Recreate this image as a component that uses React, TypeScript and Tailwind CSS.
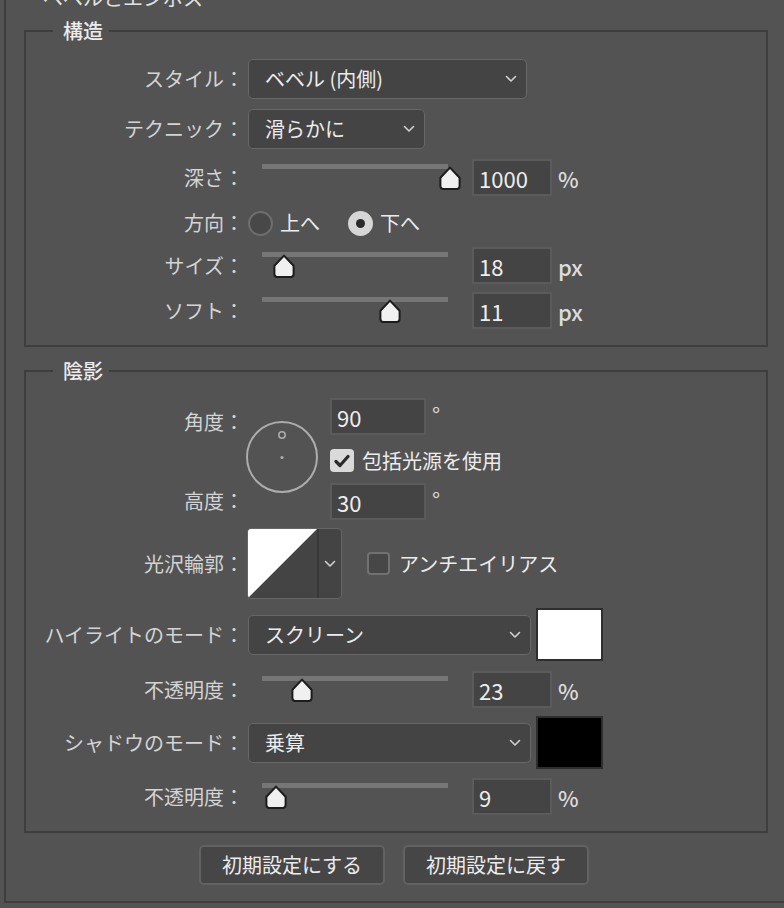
import React from 'react';

const FONT = "font-['Noto_Sans_CJK_JP','Noto_Sans',sans-serif]";

function Label({ children, className = '' }: { children: React.ReactNode; className?: string }) {
  return (
    <div className={`w-[218px] shrink-0 text-right text-[20px] leading-[28px] text-[#d4d4d4] ${className}`}>
      {children}：
    </div>
  );
}

function Chevron() {
  return (
    <svg width="12" height="8" viewBox="0 0 12 8" fill="none">
      <path d="M1.5 1.5 L6 6 L10.5 1.5" stroke="#d0d0d0" strokeWidth="1.6" strokeLinecap="round" strokeLinejoin="round" />
    </svg>
  );
}

function Select({ value, width }: { value: string; width: string }) {
  return (
    <div
      className={`${width} ml-[4px] flex h-[40px] shrink-0 items-center justify-between rounded-[5px] border border-[#676767] bg-[#444444] pl-[16px] pr-[9px] text-[20px] leading-[28px] text-[#ececec]`}
    >
      <span>{value}</span>
      <Chevron />
    </div>
  );
}

function Thumb({ left }: { left: number }) {
  return (
    <svg
      className="absolute top-[7px]"
      style={{ left: left - 12 }}
      width="24"
      height="25"
      viewBox="0 0 24 25"
      fill="none"
    >
      <path
        d="M12 1.6 L21.6 11.8 V20 Q21.6 23 18.6 23 H5.4 Q2.4 23 2.4 20 V11.8 Z"
        fill="#f0f0f0"
        stroke="#1c1c1c"
        strokeWidth="2"
        strokeLinejoin="round"
      />
    </svg>
  );
}

function Slider({ thumb }: { thumb: number }) {
  return (
    <div className="relative ml-[18px] h-[37px] w-[186px] shrink-0">
      <div className="mt-[5px] h-[5px] bg-[#767676]" />
      <Thumb left={thumb} />
    </div>
  );
}

function NumField({ value, width = 'w-[80px]', className = '' }: { value: string; width?: string; className?: string }) {
  return (
    <div
      className={`${width} ${className} flex h-[37px] shrink-0 items-center border-2 border-[#5b5b5b] bg-[#444444] pl-[5px] text-[22px] leading-[28px] text-[#eeeeee]`}
    >
      {value}
    </div>
  );
}

function Unit({ children }: { children: React.ReactNode }) {
  return <span className="ml-[6px] text-[22px] font-medium leading-[28px] text-[#dcdcdc]">{children}</span>;
}

function SliderRow({ label, thumb, value, unit, className = '' }: { label: string; thumb: number; value: string; unit: string; className?: string }) {
  return (
    <div className={`flex items-center ${className}`}>
      <Label>{label}</Label>
      <Slider thumb={thumb} />
      <NumField value={value} className="ml-[24px]" />
      <Unit>{unit}</Unit>
    </div>
  );
}

function Radio({ checked }: { checked?: boolean }) {
  if (checked) {
    return (
      <div className="flex h-[25px] w-[25px] items-center justify-center rounded-full bg-[#d6d6d6]">
        <div className="h-[9px] w-[9px] rounded-full bg-[#2a2a2a]" />
      </div>
    );
  }
  return <div className="h-[25px] w-[25px] rounded-full border-2 border-[#6e6e6e] bg-[#484848]" />;
}

function Group({ title, children, className = '' }: { title: string; children: React.ReactNode; className?: string }) {
  return (
    <fieldset className={`ml-[18px] w-[744px] border-2 border-[#3e3e3e] ${className}`}>
      <legend className="ml-[27px] pl-[10px] pr-[6px] text-[20px] font-medium leading-[28px] text-[#ececec]">{title}</legend>
      {children}
    </fieldset>
  );
}

function AngleDial() {
  return (
    <svg width="72" height="72" viewBox="0 0 72 72" fill="none">
      <circle cx="36" cy="36" r="35" stroke="#adadad" strokeWidth="2" />
      <circle cx="36" cy="14" r="3.2" stroke="#adadad" strokeWidth="1.5" />
      <circle cx="36" cy="36.5" r="1.6" fill="#adadad" />
    </svg>
  );
}

function Check() {
  return (
    <div className="flex h-[23px] w-[24px] items-center justify-center rounded-[4px] bg-[#dadada]">
      <svg width="16" height="14" viewBox="0 0 16 14" fill="none">
        <path d="M2 7.5 L6 11.5 L14 2.5" stroke="#2b2b2b" strokeWidth="3.2" strokeLinecap="round" strokeLinejoin="round" />
      </svg>
    </div>
  );
}

function ContourSwatch() {
  return (
    <div className="ml-[3px] flex h-[71px] w-[95px] shrink-0 overflow-hidden rounded-[4px] border border-[#666666] bg-[#444444]">
      <svg width="69" height="69" viewBox="0 0 69 69" className="shrink-0">
        <polygon points="0,0 69,0 0,69" fill="#ffffff" />
      </svg>
      <div className="flex flex-1 items-center justify-center border-l-2 border-[#383838]">
        <Chevron />
      </div>
    </div>
  );
}

function Button({ children }: { children: React.ReactNode }) {
  return (
    <button className="flex h-[40px] w-[186px] items-center justify-center rounded-[5px] border-2 border-[#626262] bg-[#464646] text-[20px] leading-[28px] text-[#ececec]">
      {children}
    </button>
  );
}

export default function App() {
  return (
    <div className={`h-[908px] w-[784px] overflow-hidden bg-[#535353] ${FONT}`}>
      <fieldset className="-mt-[16px] ml-[4px] w-[800px] border-2 border-[#3e3e3e] pb-[16px]">
        <legend className="ml-[27px] pl-[10px] pr-[6px] text-[20px] leading-[28px] text-[#e2e2e2]">ベベルとエンボス</legend>

        {/* 構造 */}
        <Group title="構造" className="mt-[5px] pb-[16px] pt-[14px]">
          <div className="flex items-center">
            <Label>スタイル</Label>
            <Select value="ベベル (内側)" width="w-[279px]" />
          </div>
          <div className="mt-[10px] flex items-center">
            <Label>テクニック</Label>
            <Select value="滑らかに" width="w-[177px]" />
          </div>
          <SliderRow label="深さ" thumb={188} value="1000" unit="%" className="mt-[10px]" />
          <div className="mt-[13px] flex h-[28px] items-center">
            <Label>方向</Label>
            <div className="ml-[4px]">
              <Radio />
            </div>
            <span className="ml-[7px] text-[20px] leading-[28px] text-[#ececec]">上へ</span>
            <div className="ml-[28px]">
              <Radio checked />
            </div>
            <span className="ml-[7px] text-[20px] leading-[28px] text-[#ececec]">下へ</span>
          </div>
          <SliderRow label="サイズ" thumb={22} value="18" unit="px" className="mt-[10px]" />
          <SliderRow label="ソフト" thumb={128} value="11" unit="px" className="mt-[8px]" />
        </Group>

        {/* 陰影 */}
        <Group title="陰影" className="mt-[10px] pb-[16px] pt-[13px]">
          <div className="flex">
            <div className="flex h-[122px] w-[218px] shrink-0 flex-col justify-between">
              <Label className="mt-[10px]">角度</Label>
              <Label className="mb-[5px]">高度</Label>
            </div>
            <div className="w-[86px] shrink-0 pl-[2px] pt-[23px]">
              <AngleDial />
            </div>
            <div className="flex flex-col">
              <div className="flex items-start">
                <NumField value="90" width="w-[96px]" />
                <span className="ml-[6px] mt-[2px] text-[22px] leading-[28px] text-[#dcdcdc]">°</span>
              </div>
              <div className="mt-[14px] flex items-center">
                <Check />
                <span className="ml-[8px] text-[20px] leading-[23px] text-[#ececec]">包括光源を使用</span>
              </div>
              <div className="mt-[11px] flex items-start">
                <NumField value="30" width="w-[96px]" />
                <span className="ml-[6px] mt-[2px] text-[22px] leading-[28px] text-[#dcdcdc]">°</span>
              </div>
            </div>
          </div>

          <div className="mt-[8px] flex items-center">
            <Label>光沢輪郭</Label>
            <ContourSwatch />
            <div className="ml-[25px] h-[23px] w-[23px] rounded-[4px] border-2 border-[#717171] bg-[#474747]" />
            <span className="ml-[9px] text-[20px] leading-[28px] text-[#ececec]">アンチエイリアス</span>
          </div>

          <div className="mt-[9px] flex items-center">
            <Label>ハイライトのモード</Label>
            <Select value="スクリーン" width="w-[283px]" />
            <div className="ml-[5px] h-[53px] w-[67px] shrink-0 border-2 border-[#2e2e2e] bg-white" />
          </div>
          <SliderRow label="不透明度" thumb={40} value="23" unit="%" className="mt-[10px]" />

          <div className="mt-[8px] flex items-center">
            <Label>シャドウのモード</Label>
            <Select value="乗算" width="w-[283px]" />
            <div className="ml-[5px] h-[53px] w-[67px] shrink-0 border-2 border-[#2e2e2e] bg-black" />
          </div>
          <SliderRow label="不透明度" thumb={14} value="9" unit="%" className="mt-[9px]" />
        </Group>

        <div className="ml-[193px] mt-[12px] flex gap-[18px]">
          <Button>初期設定にする</Button>
          <Button>初期設定に戻す</Button>
        </div>
      </fieldset>
    </div>
  );
}
